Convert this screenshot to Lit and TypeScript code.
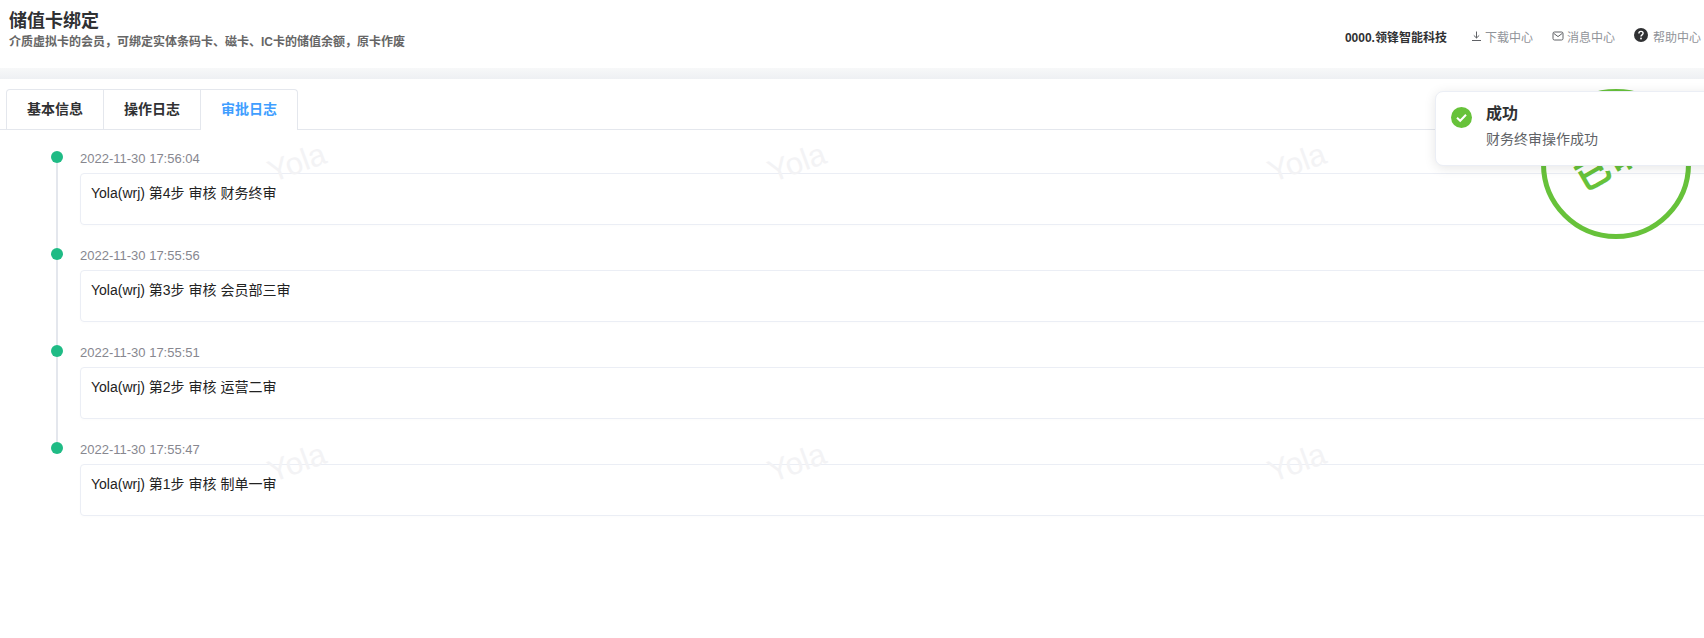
import { LitElement, html, css } from "lit";
import { customElement } from "lit/decorators.js";

const items = [
  { t: "2022-11-30 17:56:04", c: "Yola(wrj) 第4步 审核 财务终审" },
  { t: "2022-11-30 17:55:56", c: "Yola(wrj) 第3步 审核 会员部三审" },
  { t: "2022-11-30 17:55:51", c: "Yola(wrj) 第2步 审核 运营二审" },
  { t: "2022-11-30 17:55:47", c: "Yola(wrj) 第1步 审核 制单一审" },
];
const marks = [
  [297, 163], [797, 163], [1297, 163],
  [297, 463], [797, 463], [1297, 463],
];

@customElement("app-root")
export class AppRoot extends LitElement {
  static styles = css`
    :host {
      display: block;
      position: relative;
      width: 1704px;
      height: 638px;
      overflow: hidden;
      background: #fff;
      font-family: "Liberation Sans", "Noto Sans CJK SC", sans-serif;
      color: #303133;
    }
    .header {
      height: 68px;
      box-sizing: border-box;
      padding: 11px 3px 0 9px;
      display: flex;
      justify-content: space-between;
    }
    .title { font-size: 18px; font-weight: 700; line-height: 21px; color: #303133; }
    .sub { font-size: 12px; font-weight: 700; line-height: 14px; color: #666; margin-top: 3px; }
    .nav { display: flex; align-items: center; height: 50px; font-size: 12px; color: #909399; }
    .org { font-weight: 700; color: #303133; margin-right: 24px; }
    .link { display: flex; align-items: center; gap: 3px; margin-right: 19px; }
    .link:last-child { margin-right: 0; }
    .link svg { display: block; }
    .help svg { margin-top: -3px; margin-right: 2px; }
    .band { height: 11px; background: linear-gradient(#f7f8f9, #eef0f3); }
    .tabs {
      display: flex;
      margin-top: 10px;
      padding-left: 6px;
      height: 41px;
      box-sizing: border-box;
      border-bottom: 1px solid #e4e7ed;
    }
    .tab {
      width: 97px;
      height: 40px;
      box-sizing: border-box;
      border: 1px solid #e4e7ed;
      border-left: 0;
      border-bottom: 0;
      font-size: 14px;
      font-weight: 700;
      line-height: 39px;
      text-align: center;
      color: #303133;
    }
    .tab:first-child { width: 98px; border-left: 1px solid #e4e7ed; border-top-left-radius: 4px; }
    .tab:last-child { border-top-right-radius: 4px; }
    .tab.active {
      color: #409eff;
      height: 41px;
      background: #fff;
      border-left: 1px solid #e4e7ed;
      margin-left: -1px;
      width: 98px;
    }
    .timeline { width: 1800px; padding: 21px 0 0 51px; box-sizing: border-box; }
    .item { position: relative; height: 97px; display: flex; }
    .rail { width: 12px; position: relative; flex: none; }
    .rail::before {
      content: "";
      position: absolute;
      left: 5px;
      top: 6px;
      bottom: -6px;
      width: 2px;
      background: #e4e7ed;
    }
    .item:last-child .rail::before { display: none; }
    .dot { position: absolute; left: 0; top: 0; width: 12px; height: 12px; border-radius: 50%; background: #1fbb85; }
    .body { flex: 1; margin-left: 17px; }
    .time { font-size: 13px; line-height: 14px; height: 22px; padding-top: 1px; box-sizing: border-box; color: #87878f; }
    .card {
      height: 52px;
      box-sizing: border-box;
      border: 1px solid #ebeef5;
      border-radius: 4px;
      padding: 9px 10px;
      font-size: 14px;
      line-height: 20px;
      color: #222;
      box-shadow: 0 1px 3px rgba(0, 0, 0, 0.015);
    }
    .wm {
      position: absolute;
      transform: translate(-50%, -50%) rotate(-20deg);
      font-size: 31px;
      line-height: 36px;
      color: #f3f3f5;
      pointer-events: none;
    }
    .stamp {
      position: absolute;
      left: 1541px;
      top: 89px;
      width: 150px;
      height: 150px;
      box-sizing: border-box;
      border: 5px solid #67c23a;
      border-radius: 50%;
      display: flex;
      align-items: center;
      justify-content: center;
    }
    .stamp span {
      font-size: 34px;
      font-weight: 700;
      letter-spacing: 1px;
      color: #67c23a;
      transform: translate(6px, -11px) rotate(-30deg);
      white-space: nowrap;
    }
    .toast {
      position: absolute;
      left: 1435px;
      top: 91px;
      width: 330px;
      height: 75px;
      box-sizing: border-box;
      padding: 11px 14px 0 15px;
      background: #fff;
      border: 1px solid #ebeef5;
      border-radius: 8px;
      box-shadow: 0 2px 12px rgba(0, 0, 0, 0.1);
      display: flex;
      gap: 14px;
    }
    .toast svg { margin-top: 4px; flex: none; }
    .t-title { font-size: 16px; font-weight: 700; line-height: 21px; color: #303133; }
    .t-msg { font-size: 14px; line-height: 21px; margin-top: 5px; color: #606266; }
  `;

  render() {
    return html`
      <div class="header">
        <div>
          <div class="title">储值卡绑定</div>
          <div class="sub">介质虚拟卡的会员，可绑定实体条码卡、磁卡、IC卡的储值余额，原卡作废</div>
        </div>
        <div class="nav">
          <span class="org">0000.领锋智能科技</span>
          <span class="link">
            <svg width="11" height="12" viewBox="0 0 11 12" fill="none" stroke="#606266" stroke-width="1">
              <path d="M5.5 1.5V8M2.8 5.4 5.5 8l2.7-2.6M1 10.5h9" />
            </svg>
            下载中心
          </span>
          <span class="link">
            <svg width="12" height="12" viewBox="0 0 12 12" fill="none" stroke="#606266" stroke-width="1">
              <rect x="1" y="2" width="10" height="8" rx="1.5" />
              <path d="M1.5 3.2 6 6.6l4.5-3.4" />
            </svg>
            消息中心
          </span>
          <span class="link help">
            <svg width="14" height="14" viewBox="0 0 14 14">
              <circle cx="7" cy="7" r="7" fill="#303133" />
              <path d="M4.9 5.4C4.9 4.2 5.8 3.4 7 3.4s2.1.8 2.1 1.9c0 1.5-2.1 1.6-2.1 3.2" fill="none" stroke="#fff" stroke-width="1.4" />
              <circle cx="7" cy="10.5" r=".9" fill="#fff" />
            </svg>
            帮助中心
          </span>
        </div>
      </div>
      <div class="band"></div>
      <div class="tabs">
        <div class="tab">基本信息</div>
        <div class="tab">操作日志</div>
        <div class="tab active">审批日志</div>
      </div>
      <div class="timeline">
        ${items.map(
          (i) => html`
            <div class="item">
              <div class="rail"><span class="dot"></span></div>
              <div class="body">
                <div class="time">${i.t}</div>
                <div class="card">${i.c}</div>
              </div>
            </div>
          `
        )}
      </div>
      ${marks.map(
        ([x, y]) => html`<div class="wm" style="left:${x}px;top:${y}px">Yola</div>`
      )}
      <div class="stamp"><span>已审批</span></div>
      <div class="toast">
        <svg width="21" height="21" viewBox="0 0 21 21">
          <circle cx="10.5" cy="10.5" r="10.5" fill="#67c23a" />
          <path d="M6 10.8l3.2 3L15 7.8" fill="none" stroke="#fff" stroke-width="2" />
        </svg>
        <div>
          <div class="t-title">成功</div>
          <div class="t-msg">财务终审操作成功</div>
        </div>
      </div>
    `;
  }
}
